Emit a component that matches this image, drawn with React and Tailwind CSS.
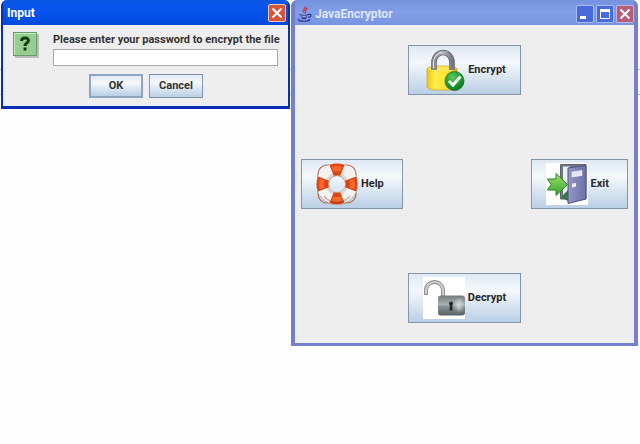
import React from 'react';

const QuestionIcon = () => (
    <svg viewBox="0 0 26 26" className="w-[26px] h-[26px] shrink-0" aria-hidden="true">
        <rect x="2" y="2" width="24" height="24" fill="#b9bcb9" />
        <rect x="0.5" y="0.5" width="23" height="23" fill="#94cf8f" stroke="#6d9a6a" />
        <path d="M1.5 22.5V1.5H22.5" fill="none" stroke="#c9ecc4" />
        <path d="M8.500 9C8.500 5 15.500 5 15.500 8.500C15.500 11 12 11 12 14" fill="none" stroke="#143f16" strokeWidth="3" />
        <rect x="10.500" y="15.500" width="3" height="3" fill="#143f16" />
    </svg>
);

const JavaIcon = () => (
    <svg viewBox="0 0 16 16" className="w-4 h-4 shrink-0" fill="none" aria-hidden="true">
        <path d="M8 0.500C9.500 2.500 5 3.500 6.500 6.500M10.500 2C7 4 9.500 5 8 7.500" stroke="#c23a4c" strokeWidth="1.500" />
        <path d="M3 8.500H11C11 13 9.500 13 7 13C4.500 13 3 12 3 8.500Z" fill="#d3dcf8" />
        <path d="M2.500 8.500C4 9.500 10 9.500 11.500 8.500M3.500 10.500C5 11.500 9 11.500 10.500 10.500M4.500 12.500H9.500M11.500 8.500C15.500 7.500 14.500 11 11 11.500M1 13.500C3 15.800 11 15.800 13 13.500" stroke="#28358f" strokeWidth="1.200" />
    </svg>
);

const EncryptIcon = () => (
    <svg viewBox="0 0 42 42" className="w-[42px] h-[42px] shrink-0" aria-hidden="true">
        <defs>
            <linearGradient id="gold" x1="0" x2="1">
                <stop offset="0" stopColor="#f0c010" />
                <stop offset="0.250" stopColor="#ffef4a" />
                <stop offset="0.700" stopColor="#fce02a" />
                <stop offset="1" stopColor="#dca80b" />
            </linearGradient>
            <linearGradient id="steel" x1="0" x2="1">
                <stop offset="0" stopColor="#85888e" />
                <stop offset="0.500" stopColor="#b4b7bc" />
                <stop offset="1" stopColor="#75787d" />
            </linearGradient>
            <radialGradient id="green" cx="0.4" cy="0.3" r="0.8">
                <stop offset="0" stopColor="#5cc95d" />
                <stop offset="0.600" stopColor="#1f9430" />
                <stop offset="1" stopColor="#0b651c" />
            </radialGradient>
        </defs>
        <path d="M4 20C4 16 34 16 34 20V36C34 41 26 41 19 41C12 41 4 41 4 37Z" fill="url(#gold)" stroke="#d9a81a" strokeWidth="0.800" />
        <path d="M5 20C9 17 29 17 33 20C29 23.500 9 23.500 5 20Z" fill="#ffe95a" />
        <path d="M11 21V13A9 9.500 0 0 1 29 13V21" fill="none" stroke="#5c5f65" strokeWidth="5.500" />
        <path d="M11 21V13A9 9.500 0 0 1 29 13V21" fill="none" stroke="url(#steel)" strokeWidth="4" />
        <path d="M10.500 19V13C10.500 8 14 4 19 3.500" fill="none" stroke="#dfe1e4" strokeWidth="1.200" />
        <circle cx="31.500" cy="32" r="9.500" fill="url(#green)" stroke="#16762a" strokeWidth="0.800" />
        <path d="M26 32L30 36L37.500 27.500" fill="none" stroke="#f4fff2" strokeWidth="3" />
    </svg>
);

const HelpIcon = () => (
    <svg viewBox="0 0 42 42" className="w-[42px] h-[42px] shrink-0" fill="none" aria-hidden="true">
        <rect x="2" y="2" width="38" height="38" rx="9" stroke="#b9694f" strokeWidth="1.200" />
        <circle cx="21" cy="21.500" r="14.500" stroke="#9a857e" strokeWidth="12" />
        <circle cx="21" cy="21" r="14.500" stroke="#f4f1ef" strokeWidth="12" />
        <circle cx="21" cy="21" r="10" stroke="#dcd6d3" strokeWidth="2.500" />
        <circle cx="21" cy="21" r="14.500" stroke="#dd4413" strokeWidth="12" pathLength="80" strokeDasharray="9.600 10.400" strokeDashoffset="4.800" />
        <circle cx="21" cy="21" r="15.500" stroke="#f7682f" strokeWidth="5" pathLength="80" strokeDasharray="7.600 12.400" strokeDashoffset="3.800" />
        <path d="M8 33C14 41.500 28 41.500 34 33" stroke="#6f4033" strokeOpacity="0.300" strokeWidth="2" />
        <circle cx="21" cy="21" r="8.500" stroke="#b09a92" strokeWidth="0.600" />
    </svg>
);

const ExitIcon = () => (
    <svg viewBox="0 0 42 42" className="w-[42px] h-[42px] shrink-0" aria-hidden="true">
        <defs>
            <linearGradient id="door" x1="0" x2="1">
                <stop offset="0" stopColor="#9297c5" />
                <stop offset="1" stopColor="#6c70a5" />
            </linearGradient>
            <linearGradient id="arrow" x1="0" y1="0" x2="0" y2="1">
                <stop offset="0" stopColor="#9de06d" />
                <stop offset="1" stopColor="#35a42d" />
            </linearGradient>
        </defs>
        <rect width="42" height="42" fill="#fff" />
        <path d="M14.500 1.500H40V36H14.500Z" fill="#737887" stroke="#5d6170" />
        <path d="M17 3.500H24V35H17Z" fill="#e9f2ec" />
        <path d="M16 33L22 27V38L16 35Z" fill="#39783e" />
        <path d="M22 5L40 2.500V36L22 40.500Z" fill="url(#door)" stroke="#4e5283" />
        <path d="M26 9L36 7.500V12.500L26 14Z" fill="#e4e6f4" stroke="#fff" strokeWidth="0.500" />
        <path d="M26 20.500L30 20V23.500L26 24.500Z" fill="#eceefa" />
        <path d="M1.500 16H10V10.500L21.500 21.500L10 32.500V27H1.500L5 21.500Z" fill="url(#arrow)" stroke="#2d8128" />
    </svg>
);

const DecryptIcon = () => (
    <svg viewBox="0 0 42 42" className="w-[42px] h-[42px] shrink-0" aria-hidden="true">
        <defs>
            <linearGradient id="body" x1="0" y1="0" x2="0" y2="1">
                <stop offset="0" stopColor="#71797b" />
                <stop offset="0.450" stopColor="#aab1b2" />
                <stop offset="0.550" stopColor="#879092" />
                <stop offset="1" stopColor="#596164" />
            </linearGradient>
            <radialGradient id="shine">
                <stop offset="0" stopColor="#d5dada" />
                <stop offset="1" stopColor="#d5dada" stopOpacity="0" />
            </radialGradient>
        </defs>
        <rect width="42" height="42" fill="#fff" />
        <path d="M3 18V13A8.500 8 0 0 1 20 13V20" fill="none" stroke="#8b8d8b" strokeWidth="4" />
        <path d="M3 17V13A8.500 8 0 0 1 20 13V20" fill="none" stroke="#cdccc8" strokeWidth="2.200" />
        <rect x="15" y="18.500" width="27" height="20" rx="3" fill="url(#body)" />
        <ellipse cx="36" cy="28" rx="6" ry="8" fill="url(#shine)" />
        <circle cx="28" cy="26.500" r="2" fill="#20282a" />
        <path d="M27 26H29L29.500 33.500H26.500Z" fill="#20282a" />
    </svg>
);

const CloseGlyph = () => (
    <svg viewBox="0 0 14 14" className="w-3.5 h-3.5" fill="none" stroke="#fff" strokeWidth="2" aria-hidden="true">
        <path d="M2.500 2.500L11.500 11.500M11.500 2.500L2.500 11.500" />
    </svg>
);

const MetalButton = ({ icon: Icon, label, wide }) => (
    <button
        type="button"
        className={`flex items-center gap-[3px] pl-3.5 py-[3px] border border-[#8495a9] bg-linear-to-b from-[#dfe9f3] via-[#f5f8fb] via-35% to-[#b9cfe5] text-[#282828] leading-4 ${wide ? 'pr-[18px]' : 'pr-3.5'}`}
    >
        <Icon />
        <span>{label}</span>
    </button>
);

const InputDialog = () => (
    <section className="w-[289px] shrink-0 rounded-t-md border-x-2 border-b-3 border-[#0a2fb5] bg-[#eeeeee]">
        <header className="h-[25px] flex items-center justify-between pl-1 bg-linear-to-b from-[#0b57e4] via-[#0453ec] to-[#0649dc] rounded-t-sm">
            <h1 className="text-white text-xs">Input</h1>
            <button type="button" aria-label="Close" className="w-[18px] h-[18px] mr-0.5 flex items-center justify-center rounded-xs border border-[#f3c7bd] bg-[#d9553a]">
                <CloseGlyph />
            </button>
        </header>
        <form className="flex items-start gap-3.5 px-2.5 pt-[7px] pb-2" onSubmit={(e) => e.preventDefault()}>
            <QuestionIcon />
            <div className="flex-1 min-w-0">
                <label htmlFor="password" className="block whitespace-nowrap leading-4">Please enter your password to encrypt the file</label>
                <input id="password" type="text" className="block w-full h-[17px] mt-px px-1 bg-white border border-[#a4a9ae]" />
                <div className="flex gap-1.5 mt-2 pl-9">
                    <button type="submit" className="w-[54px] h-6 border-2 border-[#8ea6c0] bg-linear-to-b from-[#dfe9f3] via-[#f5f8fb] via-35% to-[#b9cfe5]">OK</button>
                    <button type="button" className="w-[54px] h-6 border border-[#8495a9] bg-linear-to-b from-[#dfe9f3] via-[#f5f8fb] via-35% to-[#b9cfe5]">Cancel</button>
                </div>
            </div>
        </form>
    </section>
);

const EncryptorWindow = () => (
    <section className="flex-1 min-w-[340px] rounded-t-md border-x-4 border-b-3 border-[#7480ce] bg-[#eeeeee]">
        <header className="h-[25px] flex items-center gap-0.5 pl-0.5 pt-0.5 bg-linear-to-b from-[#7692dc] via-[#819ee8] to-[#7994df]">
            <JavaIcon />
            <h1 className="flex-1 text-[#dce6fb] text-xs">JavaEncryptor</h1>
            <div className="flex gap-0.5">
                <button type="button" aria-label="Minimize" className="w-[18px] h-[18px] flex items-end p-[3px] rounded-xs border border-[#a9bcf2] bg-[#486bd9]">
                    <span className="w-1.5 h-[3px] bg-white" />
                </button>
                <button type="button" aria-label="Maximize" className="w-[18px] h-[18px] flex items-center justify-center rounded-xs border border-[#a9bcf2] bg-[#486bd9]">
                    <span className="w-2.5 h-2.5 border border-t-3 border-white" />
                </button>
                <button type="button" aria-label="Close" className="w-[18px] h-[18px] flex items-center justify-center rounded-xs border border-[#c1b5dc] bg-[#b55e78]">
                    <CloseGlyph />
                </button>
            </div>
        </header>
        <main className="flex flex-col gap-16 px-1.5 py-5">
            <div className="flex justify-center">
                <MetalButton icon={EncryptIcon} label="Encrypt" />
            </div>
            <div className="flex justify-between">
                <MetalButton icon={HelpIcon} label="Help" wide />
                <MetalButton icon={ExitIcon} label="Exit" wide />
            </div>
            <div className="flex justify-center">
                <MetalButton icon={DecryptIcon} label="Decrypt" />
            </div>
        </main>
    </section>
);

export default function App() {
    return (
        <div className="relative isolate min-h-screen flex items-start gap-px pl-px pr-0.5 bg-[#fefefe] text-[#333333] text-[11px] font-bold font-[Roboto,sans-serif]">
            {/* edge of the page that lies behind the windows */}
            <div className="absolute -z-10 inset-x-0 top-[69px] h-[26px] border-y border-[#a9b4e4]" />
            <InputDialog />
            <EncryptorWindow />
        </div>
    );
}
